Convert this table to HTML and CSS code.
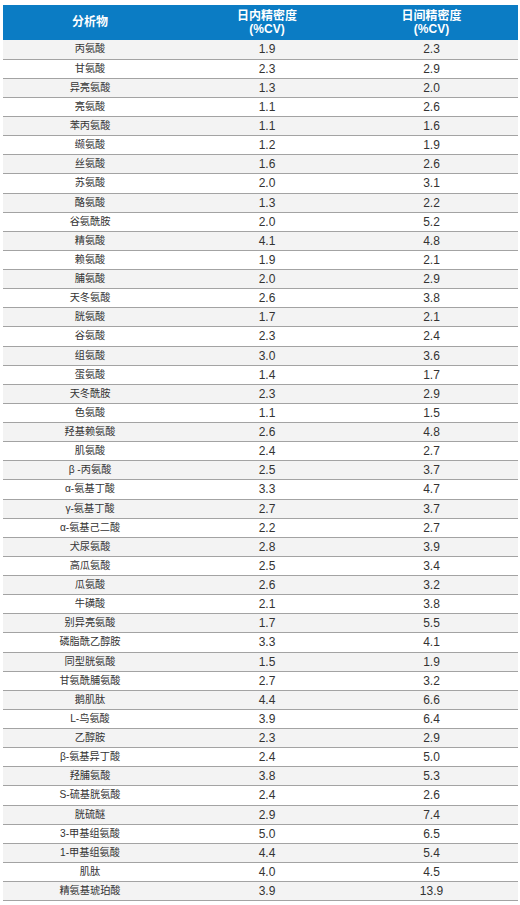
FILE: index.html
```html
<!DOCTYPE html>
<html lang="zh">
<head>
<meta charset="utf-8">
<link rel="stylesheet" href="styles.css">
</head>
<body>
<table class="prec">
<thead>
<tr><th class="c1">分析物</th><th class="c2">日内精密度<br>(%CV)</th><th class="c3">日间精密度<br>(%CV)</th></tr>
</thead>
<tbody>
<tr><td class="c1">丙氨酸</td><td class="c2">1.9</td><td class="c3">2.3</td></tr>
<tr><td class="c1">甘氨酸</td><td class="c2">2.3</td><td class="c3">2.9</td></tr>
<tr><td class="c1">异亮氨酸</td><td class="c2">1.3</td><td class="c3">2.0</td></tr>
<tr><td class="c1">亮氨酸</td><td class="c2">1.1</td><td class="c3">2.6</td></tr>
<tr><td class="c1">苯丙氨酸</td><td class="c2">1.1</td><td class="c3">1.6</td></tr>
<tr><td class="c1">缬氨酸</td><td class="c2">1.2</td><td class="c3">1.9</td></tr>
<tr><td class="c1">丝氨酸</td><td class="c2">1.6</td><td class="c3">2.6</td></tr>
<tr><td class="c1">苏氨酸</td><td class="c2">2.0</td><td class="c3">3.1</td></tr>
<tr><td class="c1">酪氨酸</td><td class="c2">1.3</td><td class="c3">2.2</td></tr>
<tr><td class="c1">谷氨酰胺</td><td class="c2">2.0</td><td class="c3">5.2</td></tr>
<tr><td class="c1">精氨酸</td><td class="c2">4.1</td><td class="c3">4.8</td></tr>
<tr><td class="c1">赖氨酸</td><td class="c2">1.9</td><td class="c3">2.1</td></tr>
<tr><td class="c1">脯氨酸</td><td class="c2">2.0</td><td class="c3">2.9</td></tr>
<tr><td class="c1">天冬氨酸</td><td class="c2">2.6</td><td class="c3">3.8</td></tr>
<tr><td class="c1">胱氨酸</td><td class="c2">1.7</td><td class="c3">2.1</td></tr>
<tr><td class="c1">谷氨酸</td><td class="c2">2.3</td><td class="c3">2.4</td></tr>
<tr><td class="c1">组氨酸</td><td class="c2">3.0</td><td class="c3">3.6</td></tr>
<tr><td class="c1">蛋氨酸</td><td class="c2">1.4</td><td class="c3">1.7</td></tr>
<tr><td class="c1">天冬酰胺</td><td class="c2">2.3</td><td class="c3">2.9</td></tr>
<tr><td class="c1">色氨酸</td><td class="c2">1.1</td><td class="c3">1.5</td></tr>
<tr><td class="c1">羟基赖氨酸</td><td class="c2">2.6</td><td class="c3">4.8</td></tr>
<tr><td class="c1">肌氨酸</td><td class="c2">2.4</td><td class="c3">2.7</td></tr>
<tr><td class="c1">β -丙氨酸</td><td class="c2">2.5</td><td class="c3">3.7</td></tr>
<tr><td class="c1">α-氨基丁酸</td><td class="c2">3.3</td><td class="c3">4.7</td></tr>
<tr><td class="c1">γ-氨基丁酸</td><td class="c2">2.7</td><td class="c3">3.7</td></tr>
<tr><td class="c1">α-氨基己二酸</td><td class="c2">2.2</td><td class="c3">2.7</td></tr>
<tr><td class="c1">犬尿氨酸</td><td class="c2">2.8</td><td class="c3">3.9</td></tr>
<tr><td class="c1">高瓜氨酸</td><td class="c2">2.5</td><td class="c3">3.4</td></tr>
<tr><td class="c1">瓜氨酸</td><td class="c2">2.6</td><td class="c3">3.2</td></tr>
<tr><td class="c1">牛磺酸</td><td class="c2">2.1</td><td class="c3">3.8</td></tr>
<tr><td class="c1">别异亮氨酸</td><td class="c2">1.7</td><td class="c3">5.5</td></tr>
<tr><td class="c1">磷脂酰乙醇胺</td><td class="c2">3.3</td><td class="c3">4.1</td></tr>
<tr><td class="c1">同型胱氨酸</td><td class="c2">1.5</td><td class="c3">1.9</td></tr>
<tr><td class="c1">甘氨酰脯氨酸</td><td class="c2">2.7</td><td class="c3">3.2</td></tr>
<tr><td class="c1">鹅肌肽</td><td class="c2">4.4</td><td class="c3">6.6</td></tr>
<tr><td class="c1">L-鸟氨酸</td><td class="c2">3.9</td><td class="c3">6.4</td></tr>
<tr><td class="c1">乙醇胺</td><td class="c2">2.3</td><td class="c3">2.9</td></tr>
<tr><td class="c1">β-氨基异丁酸</td><td class="c2">2.4</td><td class="c3">5.0</td></tr>
<tr><td class="c1">羟脯氨酸</td><td class="c2">3.8</td><td class="c3">5.3</td></tr>
<tr><td class="c1">S-硫基胱氨酸</td><td class="c2">2.4</td><td class="c3">2.6</td></tr>
<tr><td class="c1">胱硫醚</td><td class="c2">2.9</td><td class="c3">7.4</td></tr>
<tr><td class="c1">3-甲基组氨酸</td><td class="c2">5.0</td><td class="c3">6.5</td></tr>
<tr><td class="c1">1-甲基组氨酸</td><td class="c2">4.4</td><td class="c3">5.4</td></tr>
<tr><td class="c1">肌肽</td><td class="c2">4.0</td><td class="c3">4.5</td></tr>
<tr><td class="c1">精氨基琥珀酸</td><td class="c2">3.9</td><td class="c3">13.9</td></tr>
</tbody>
</table>
</body>
</html>
```
FILE: styles.css
```css
html, body {
  margin: 0;
  padding: 0;
  background: #ffffff;
}
body {
  padding: 5px 2px 0 3px;
  font-family: "Liberation Sans", "Noto Sans CJK SC", sans-serif;
  color: #333333;
}
.prec {
  width: 515px;
  border-collapse: collapse;
  table-layout: fixed;
}
.prec th {
  background: #0b7cc4;
  color: #ffffff;
  font-family: "Liberation Sans", "Noto Sans CJK SC", sans-serif;
  font-weight: 700;
  font-size: 12px;
  line-height: 13px;
  height: 35px;
  padding: 0;
  text-align: center;
  vertical-align: middle;
  box-sizing: border-box;
}
.prec .c1 { width: 174px; }
.prec .c2 { width: 180px; }
.prec .c3 { width: 161px; padding-right: 12px; }
.prec td {
  height: 19.13px;
  padding: 0;
  box-sizing: border-box;
  border-bottom: 1px solid #a3a3a3;
  text-align: center;
  vertical-align: middle;
  line-height: 14px;
  font-size: 12px;
  color: #333333;
}
.prec td.c1 {
  font-size: 10.2px;
}
.prec td.c3 { padding-right: 12px; }
.prec tbody tr:nth-child(odd) td {
  background: #f3f3f3;
}
.prec tbody tr:nth-child(even) td {
  background: #ffffff;
}
```
